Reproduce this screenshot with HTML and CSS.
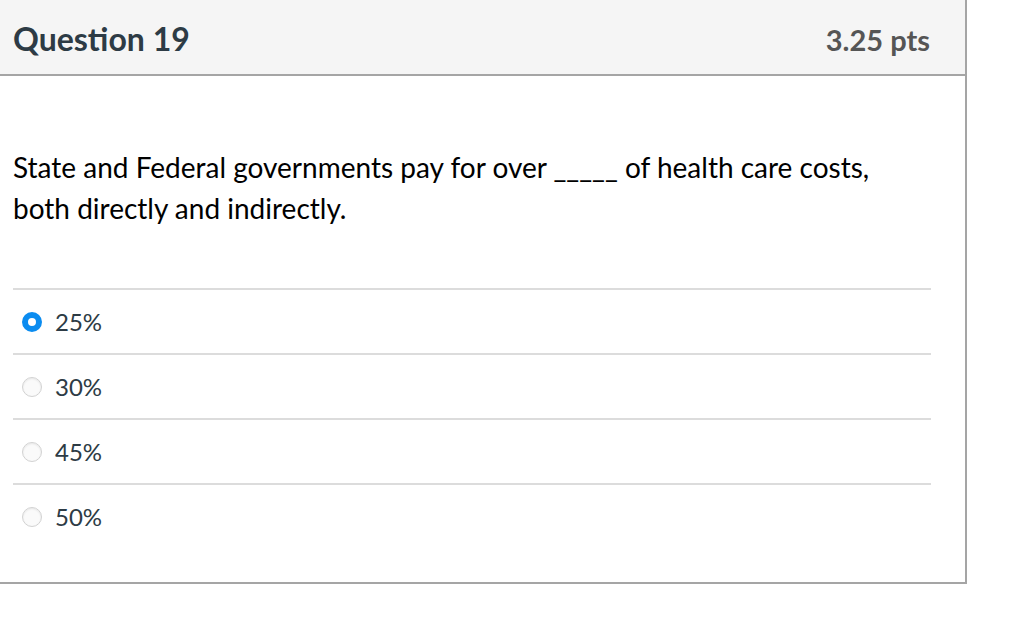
FILE: index.html
```html
<!DOCTYPE html>
<html lang="en">
<head>
    <meta charset="UTF-8">
    <meta name="viewport" content="width=device-width, initial-scale=1.0">
    <title>Question 19</title>
    <link rel="stylesheet" href="styles.css">
</head>
<body>
    <div class="question">
        <div class="question-header">
            <h2 class="question-name">Question 19</h2>
            <span class="question-points">3.25 pts</span>
        </div>

        <div class="question-body">
            <p class="question-text">State and Federal governments pay for over _____ of health care costs, both directly and indirectly.</p>

            <!-- Answers -->
            <div class="answers">
                <label class="answer">
                    <span class="radio checked"></span>
                    <span class="answer-text">25%</span>
                </label>
                <label class="answer">
                    <span class="radio"></span>
                    <span class="answer-text">30%</span>
                </label>
                <label class="answer">
                    <span class="radio"></span>
                    <span class="answer-text">45%</span>
                </label>
                <label class="answer">
                    <span class="radio"></span>
                    <span class="answer-text">50%</span>
                </label>
            </div>
        </div>
    </div>
</body>
</html>
```

FILE: styles.css
```css
body {
    font-family: Lato, "Open Sans", sans-serif;
    background-color: #fff;
    color: #2d3b45;
    margin: 0;
}
.question {
    width: 965px;
    border-right: 2px solid #a5a5a5;
    border-bottom: 2px solid #a5a5a5;
}
.question-header {
    display: flex;
    justify-content: space-between;
    align-items: center;
    height: 74px;
    padding: 0 35px 0 13px;
    background-color: #f5f5f5;
    border-bottom: 2px solid #a5a5a5;
}
.question-name {
    margin: 0;
    font-size: 32px;
    font-weight: bold;
    color: #2d3b45;
    padding-top: 2px;
}
.question-points {
    font-size: 29px;
    font-weight: bold;
    color: #555;
    padding-top: 4px;
}
.question-body {
    padding: 71px 0 34px 13px;
}
.question-text {
    margin: 0 0 59px;
    max-width: 880px;
    font-size: 28px;
    line-height: 41px;
    color: #000;
}
.answers {
    width: 918px;
}
.answer {
    display: flex;
    align-items: center;
    gap: 13px;
    height: 63px;
    padding-left: 9px;
    border-top: 2px solid #dcdcdc;
}
.radio {
    box-sizing: border-box;
    width: 20px;
    height: 20px;
    border-radius: 50%;
    background-color: #fafafa;
    border: 1px solid #d2d2d2;
    box-shadow: inset 0 1px 2px rgba(0, 0, 0, 0.08);
}
.radio.checked {
    border: 6px solid #0b8cf0;
    background-color: #fff;
    box-shadow: none;
}
.answer-text {
    font-size: 24px;
}
```
